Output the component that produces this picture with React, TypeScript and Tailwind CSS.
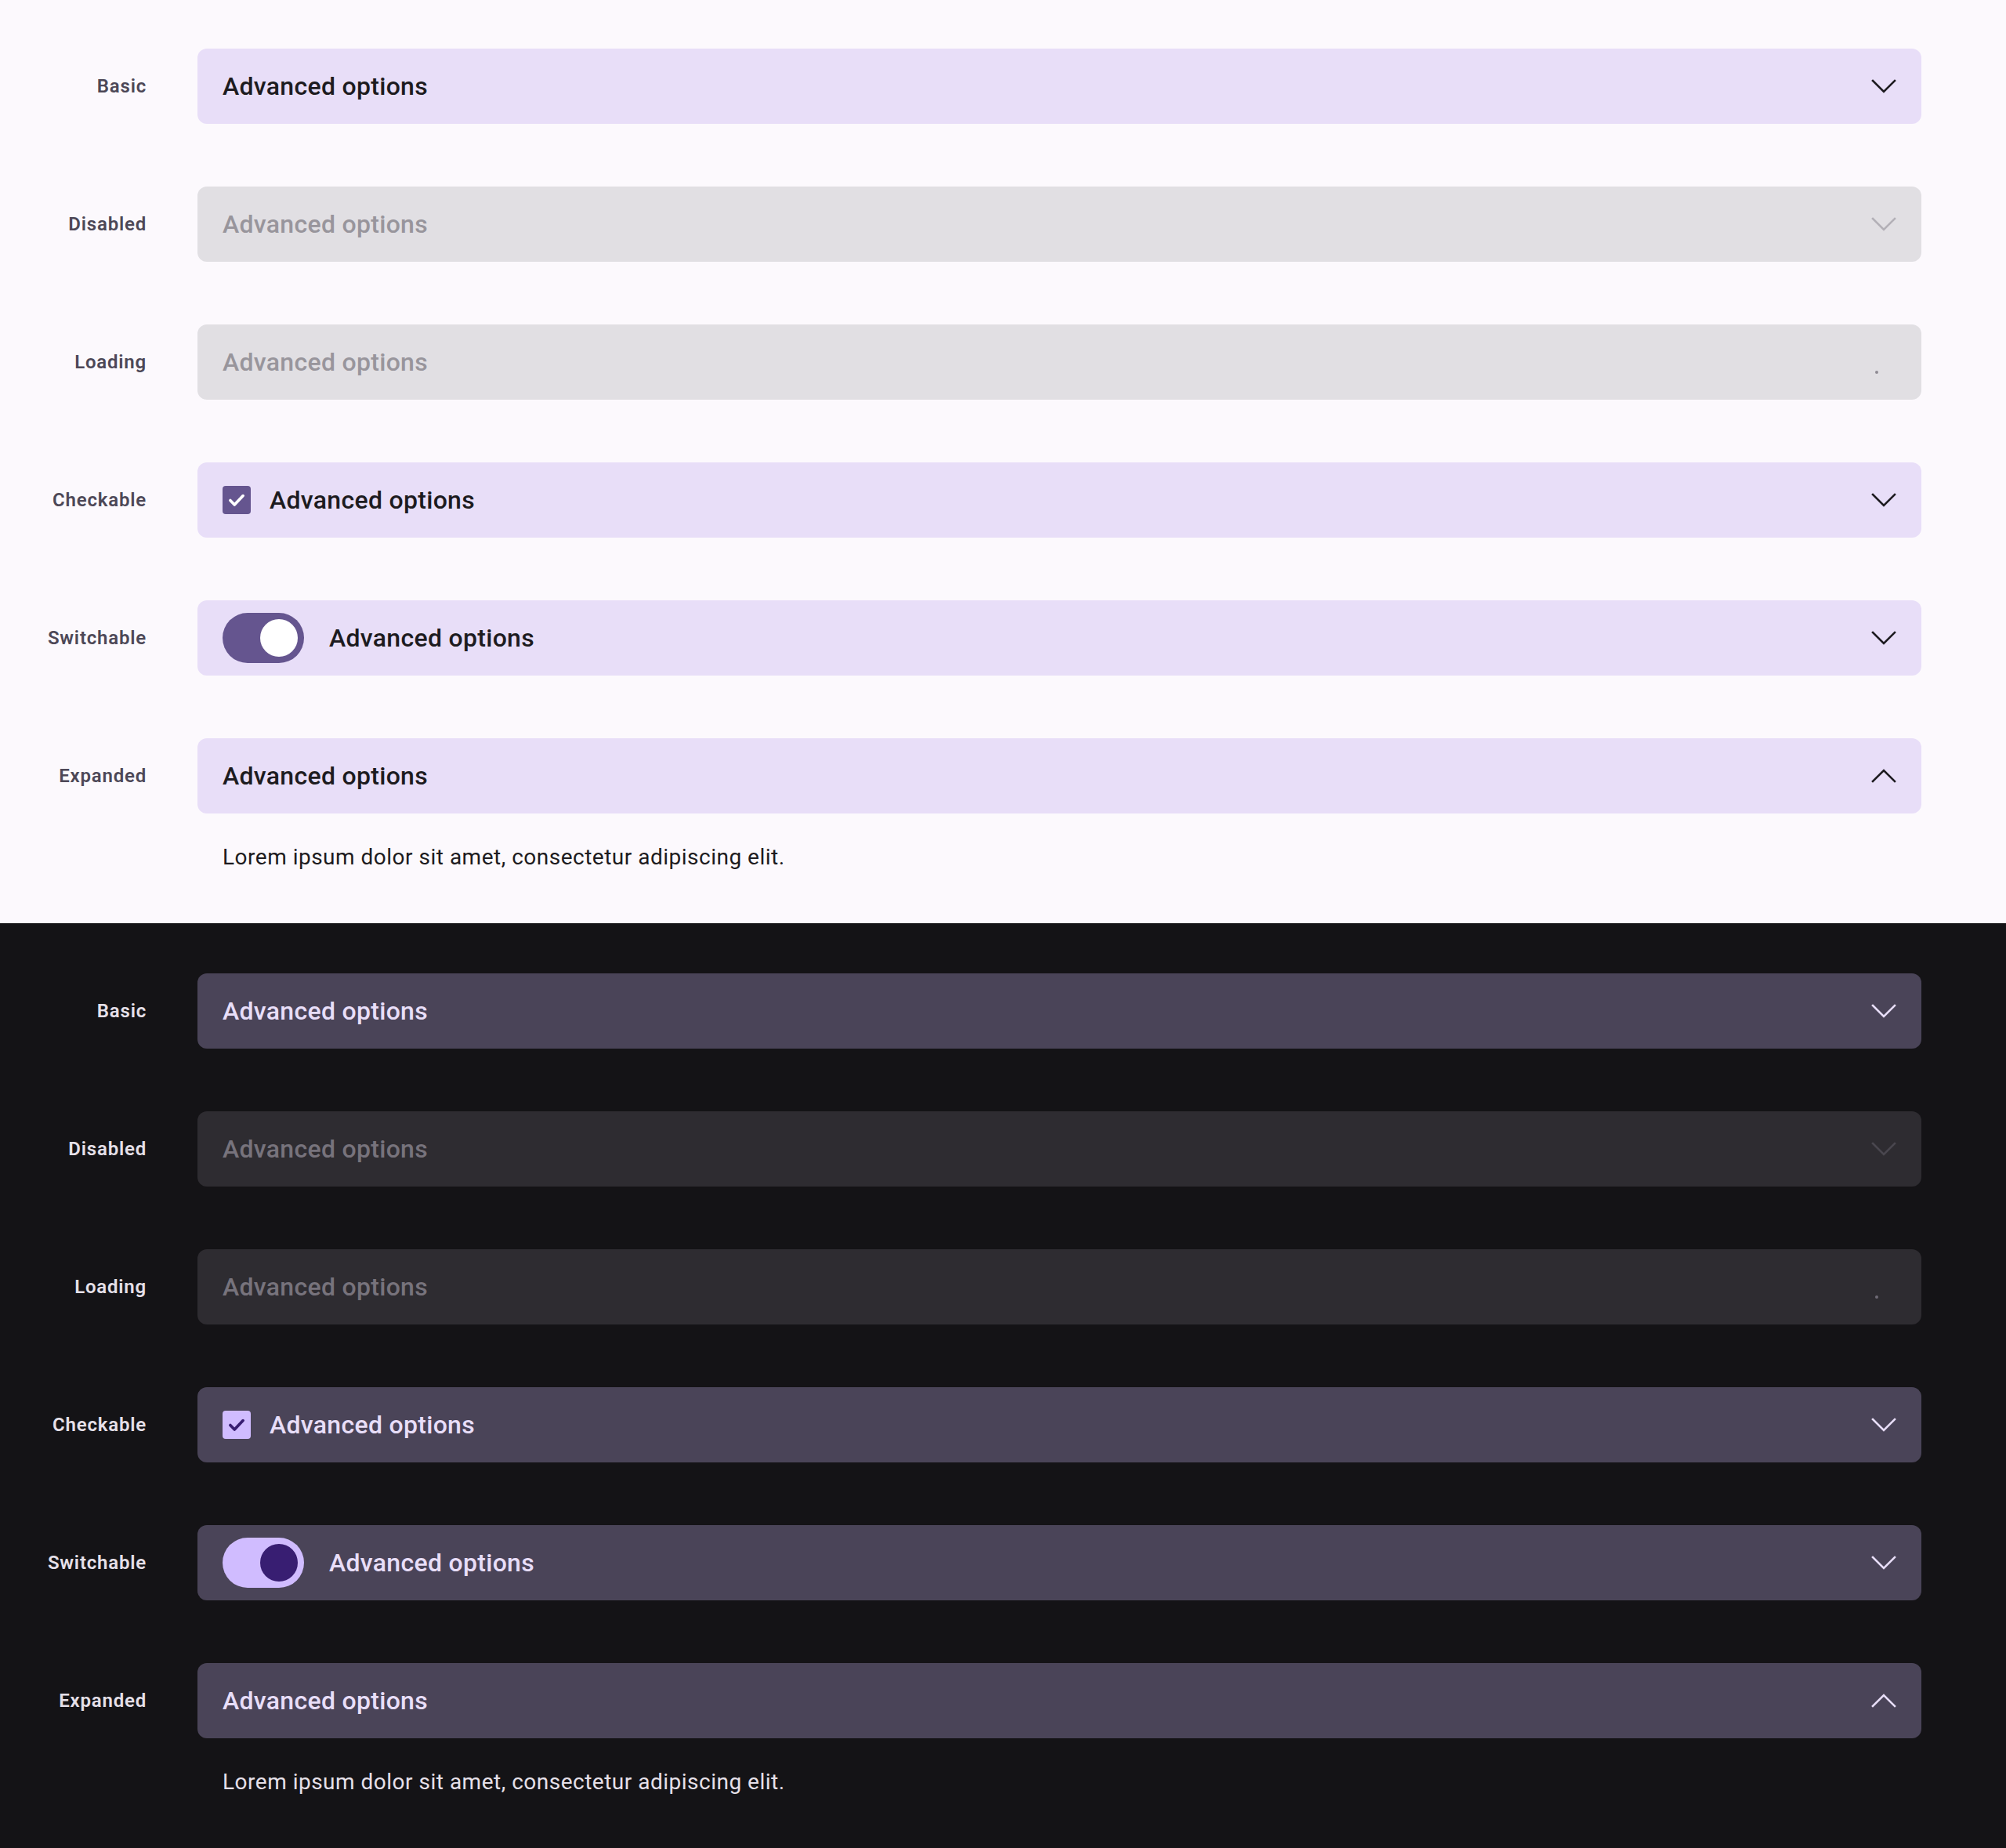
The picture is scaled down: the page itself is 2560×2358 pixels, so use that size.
import React from 'react';

type Theme = 'light' | 'dark';

const palette = {
  light: {
    page: 'bg-[#fcf9fd]',
    label: 'text-[#4d4857]',
    panel: 'bg-[#e8def8]',
    title: 'text-[#1d1b20]',
    disabledPanel: 'bg-[#e1dfe3]',
    disabledText: 'text-[#98959c]',
    body: 'text-[#1d1b20]',
    icon: '#1d1b20',
    disabledIcon: '#b3b0b7',
    dot: '#8f8c94',
  },
  dark: {
    page: 'bg-[#141316]',
    label: 'text-[#e6e0e9]',
    panel: 'bg-[#4a4458]',
    title: 'text-[#e8def8]',
    disabledPanel: 'bg-[#2e2c31]',
    disabledText: 'text-[#77737c]',
    body: 'text-[#e6e0e9]',
    icon: '#e8def8',
    disabledIcon: '#4a474f',
    dot: '#6f6b76',
  },
};

const Chevron = ({ up, color }: { up?: boolean; color: string }) => (
  <svg width="32" height="18" viewBox="0 0 32 18" fill="none">
    <polyline
      points={up ? '2,16 16,2 30,16' : '2,2 16,16 30,2'}
      stroke={color}
      strokeWidth="2.6"
      strokeLinecap="square"
      strokeLinejoin="miter"
    />
  </svg>
);

const Checkbox = ({ theme }: { theme: Theme }) => (
  <div
    className={`w-9 h-9 rounded-[4px] flex items-center justify-center shrink-0 ${
      theme === 'light' ? 'bg-[#65558f]' : 'bg-[#d0bcff]'
    }`}
  >
    <svg width="26" height="26" viewBox="0 0 24 24" fill="none">
      <polyline
        points="4.5,12.5 9.5,17.5 19.5,7"
        stroke={theme === 'light' ? '#ffffff' : '#381e72'}
        strokeWidth="3.4"
        strokeLinecap="round"
        strokeLinejoin="round"
      />
    </svg>
  </div>
);

const Switch = ({ theme }: { theme: Theme }) => (
  <div
    className={`w-[104px] h-16 rounded-full flex items-center justify-end pr-2 shrink-0 ${
      theme === 'light' ? 'bg-[#65558f]' : 'bg-[#d0bcff]'
    }`}
  >
    <div className={`w-12 h-12 rounded-full ${theme === 'light' ? 'bg-white' : 'bg-[#381e72]'}`} />
  </div>
);

type Variant = 'basic' | 'disabled' | 'loading' | 'checkable' | 'switchable' | 'expanded';

const rows: { label: string; variant: Variant }[] = [
  { label: 'Basic', variant: 'basic' },
  { label: 'Disabled', variant: 'disabled' },
  { label: 'Loading', variant: 'loading' },
  { label: 'Checkable', variant: 'checkable' },
  { label: 'Switchable', variant: 'switchable' },
  { label: 'Expanded', variant: 'expanded' },
];

const Row = ({ label, variant, theme }: { label: string; variant: Variant; theme: Theme }) => {
  const c = palette[theme];
  const off = variant === 'disabled' || variant === 'loading';
  return (
    <div className="flex items-start">
      <div className={`w-[187px] h-24 flex items-center justify-end text-[24px] font-semibold tracking-[0.8px] ${c.label}`}>
        {label}
      </div>
      <div className="ml-[65px] w-[2200px]">
        <div
          className={`h-24 rounded-[12px] flex items-center pl-8 pr-6 ${off ? c.disabledPanel : c.panel}`}
        >
          {variant === 'checkable' && (
            <div className="mr-6">
              <Checkbox theme={theme} />
            </div>
          )}
          {variant === 'switchable' && (
            <div className="mr-8">
              <Switch theme={theme} />
            </div>
          )}
          <span
            className={`flex-1 text-[32px] font-medium tracking-[0.3px] ${off ? c.disabledText : c.title}`}
          >
            Advanced options
          </span>
          <div className="w-12 h-12 flex items-center justify-center">
            {variant === 'loading' ? (
              <svg width="48" height="48" viewBox="0 0 48 48" className="translate-x-[-9px]">
                <circle cx="24" cy="37" r="2" fill={c.dot} />
              </svg>
            ) : (
              <Chevron up={variant === 'expanded'} color={variant === 'disabled' ? c.disabledIcon : c.icon} />
            )}
          </div>
        </div>
        {variant === 'expanded' && (
          <p className={`pl-8 pt-[38px] text-[28px] leading-[36px] tracking-[0.5px] ${c.body}`}>
            Lorem ipsum dolor sit amet, consectetur adipiscing elit.
          </p>
        )}
      </div>
    </div>
  );
};

const Section = ({ theme }: { theme: Theme }) => (
  <section
    className={`${palette[theme].page} ${theme === 'light' ? 'h-[1178px] pt-[62px]' : 'h-[1180px] pt-[64px]'}`}
  >
    <div className="flex flex-col gap-20">
      {rows.map((r) => (
        <Row key={r.label} label={r.label} variant={r.variant} theme={theme} />
      ))}
    </div>
  </section>
);

export default function App() {
  return (
    <div className="w-[2560px] font-['Roboto',sans-serif]">
      <Section theme="light" />
      <Section theme="dark" />
    </div>
  );
}
